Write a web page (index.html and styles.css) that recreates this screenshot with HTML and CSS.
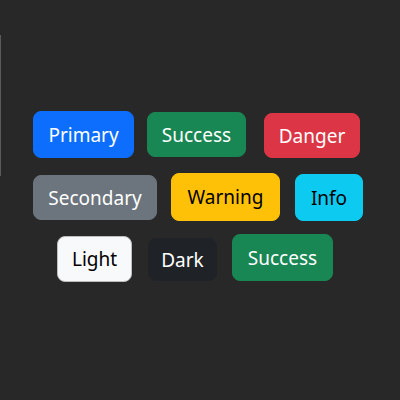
FILE: index.html
```html
<!DOCTYPE html>
<html>
<head>
<meta charset="utf-8">
<link rel="stylesheet" href="styles.css">
</head>
<body>
<div class="page">
  <div class="rule"></div>
  <div class="buttons">
    <div class="row row-1">
      <button class="btn btn-primary b-primary">Primary</button>
      <button class="btn btn-success b-success1">Success</button>
      <button class="btn btn-danger b-danger">Danger</button>
    </div>
    <div class="row row-2">
      <button class="btn btn-secondary b-secondary">Secondary</button>
      <button class="btn btn-warning b-warning">Warning</button>
      <button class="btn btn-info b-info">Info</button>
    </div>
    <div class="row row-3">
      <button class="btn btn-light b-light">Light</button>
      <button class="btn btn-dark b-dark">Dark</button>
      <button class="btn btn-success b-success2">Success</button>
    </div>
  </div>
</div>
</body>
</html>
```
FILE: styles.css
```css
html, body {
  margin: 0;
  padding: 0;
  background: #282828;
  width: 400px;
  height: 400px;
  overflow: hidden;
}
.page {
  display: flex;
  align-items: flex-start;
}
.rule {
  width: 1px;
  height: 141px;
  margin-top: 35px;
  background: #5a5a5a;
  flex: none;
}
.buttons {
  padding-top: 111px;
  display: flex;
  flex-direction: column;
}
.row {
  display: flex;
  align-items: flex-start;
}
.row-1 { margin-left: 32px; }
.row-2 { margin-left: 32px; margin-top: 15px; }
.row-3 { margin-left: 56px; margin-top: 13px; }
.btn {
  font-family: "Noto Sans", "DejaVu Sans", sans-serif;
  font-size: 19px;
  line-height: 30px;
  height: 47px;
  padding: 0;
  text-align: center;
  border: 1px solid transparent;
  border-radius: 8px;
  color: #fff;
  cursor: pointer;
  flex: none;
}
.btn-primary { background: #0d6efd; border-color: #0d6efd; }
.btn-success { background: #198754; border-color: #198754; }
.btn-danger { background: #dc3545; border-color: #dc3545; }
.btn-secondary { background: #6c757d; border-color: #6c757d; }
.btn-warning { background: #ffc107; border-color: #ffc107; color: #000; }
.btn-info { background: #0dcaf0; border-color: #0dcaf0; color: #000; }
.btn-light { background: #f8f9fa; border-color: #bdbdbd; color: #000; }
.btn-dark { background: #1f2226; border-color: #1f2226; }

.b-primary { width: 101px; }
.b-success1 { width: 99px; height: 45px; margin-left: 13px; margin-top: 1px; }
.b-danger { width: 96px; height: 45px; margin-left: 18px; margin-top: 2px; }
.b-secondary { width: 124px; height: 45px; margin-top: 2px; }
.b-warning { width: 109px; height: 48px; margin-left: 14px; }
.b-info { width: 68px; margin-left: 15px; margin-top: 1px; }
.b-light { width: 75px; height: 46px; margin-top: 2px; }
.b-dark { width: 69px; height: 43px; margin-left: 16px; margin-top: 4px; }
.b-success2 { width: 101px; margin-left: 15px; }
```
